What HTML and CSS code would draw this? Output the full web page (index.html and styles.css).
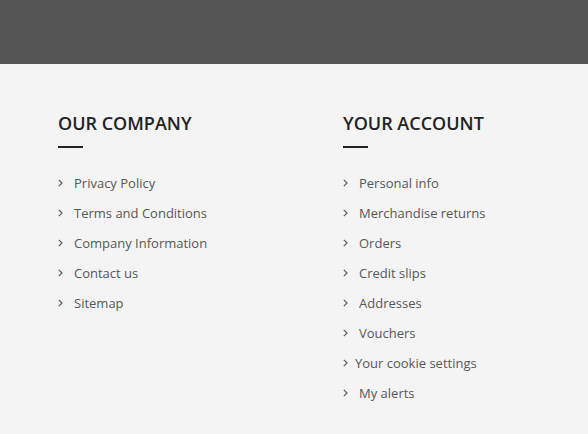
FILE: index.html
```html
<!DOCTYPE html>
<html>
<head>
<meta charset="utf-8">
<link rel="stylesheet" href="styles.css">
</head>
<body>
<div class="topbar"></div>
<footer class="footer">
  <div class="col">
    <h3 class="title">OUR COMPANY</h3>
    <div class="rule"></div>
    <ul class="links">
      <li><svg class="chev" viewBox="0 0 5 8"><path d="M0.8 0.8 L4 4 L0.8 7.2" /></svg><span class="txt">Privacy Policy</span></li>
      <li><svg class="chev" viewBox="0 0 5 8"><path d="M0.8 0.8 L4 4 L0.8 7.2" /></svg><span class="txt">Terms and Conditions</span></li>
      <li><svg class="chev" viewBox="0 0 5 8"><path d="M0.8 0.8 L4 4 L0.8 7.2" /></svg><span class="txt">Company Information</span></li>
      <li><svg class="chev" viewBox="0 0 5 8"><path d="M0.8 0.8 L4 4 L0.8 7.2" /></svg><span class="txt">Contact us</span></li>
      <li><svg class="chev" viewBox="0 0 5 8"><path d="M0.8 0.8 L4 4 L0.8 7.2" /></svg><span class="txt">Sitemap</span></li>
    </ul>
  </div>
  <div class="col">
    <h3 class="title">YOUR ACCOUNT</h3>
    <div class="rule"></div>
    <ul class="links">
      <li><svg class="chev" viewBox="0 0 5 8"><path d="M0.8 0.8 L4 4 L0.8 7.2" /></svg><span class="txt">Personal info</span></li>
      <li><svg class="chev" viewBox="0 0 5 8"><path d="M0.8 0.8 L4 4 L0.8 7.2" /></svg><span class="txt">Merchandise returns</span></li>
      <li><svg class="chev" viewBox="0 0 5 8"><path d="M0.8 0.8 L4 4 L0.8 7.2" /></svg><span class="txt">Orders</span></li>
      <li><svg class="chev" viewBox="0 0 5 8"><path d="M0.8 0.8 L4 4 L0.8 7.2" /></svg><span class="txt">Credit slips</span></li>
      <li><svg class="chev" viewBox="0 0 5 8"><path d="M0.8 0.8 L4 4 L0.8 7.2" /></svg><span class="txt">Addresses</span></li>
      <li><svg class="chev" viewBox="0 0 5 8"><path d="M0.8 0.8 L4 4 L0.8 7.2" /></svg><span class="txt">Vouchers</span></li>
      <li><svg class="chev" viewBox="0 0 5 8"><path d="M0.8 0.8 L4 4 L0.8 7.2" /></svg><span class="txt tight">Your cookie settings</span></li>
      <li><svg class="chev" viewBox="0 0 5 8"><path d="M0.8 0.8 L4 4 L0.8 7.2" /></svg><span class="txt">My alerts</span></li>
    </ul>
  </div>
</footer>
</body>
</html>
```
FILE: styles.css
```css
html, body {
  margin: 0;
  padding: 0;
}
body {
  background: #f4f4f4;
  font-family: "Open Sans", "Liberation Sans", sans-serif;
  height: 434px;
  overflow: hidden;
}
.topbar {
  height: 64px;
  background: #555555;
}
.footer {
  display: grid;
  grid-template-columns: 285px 245px;
  padding: 47px 0 0 58px;
}
.title {
  margin: 0;
  font-size: 18px;
  line-height: 24px;
  font-weight: 600;
  color: #232323;
}
.rule {
  width: 25px;
  height: 2px;
  background: #232323;
  margin-top: 11px;
}
.links {
  list-style: none;
  margin: 20px 0 0 0;
  padding: 0;
}
.links li {
  display: flex;
  align-items: center;
  height: 30px;
  font-size: 13px;
  color: #575757;
}
.chev {
  width: 5px;
  height: 8px;
  fill: none;
  stroke: #5a5a5a;
  stroke-width: 1.2;
  flex: none;
}
.txt {
  margin-left: 11px;
}
.txt.tight {
  margin-left: 7px;
}
```
